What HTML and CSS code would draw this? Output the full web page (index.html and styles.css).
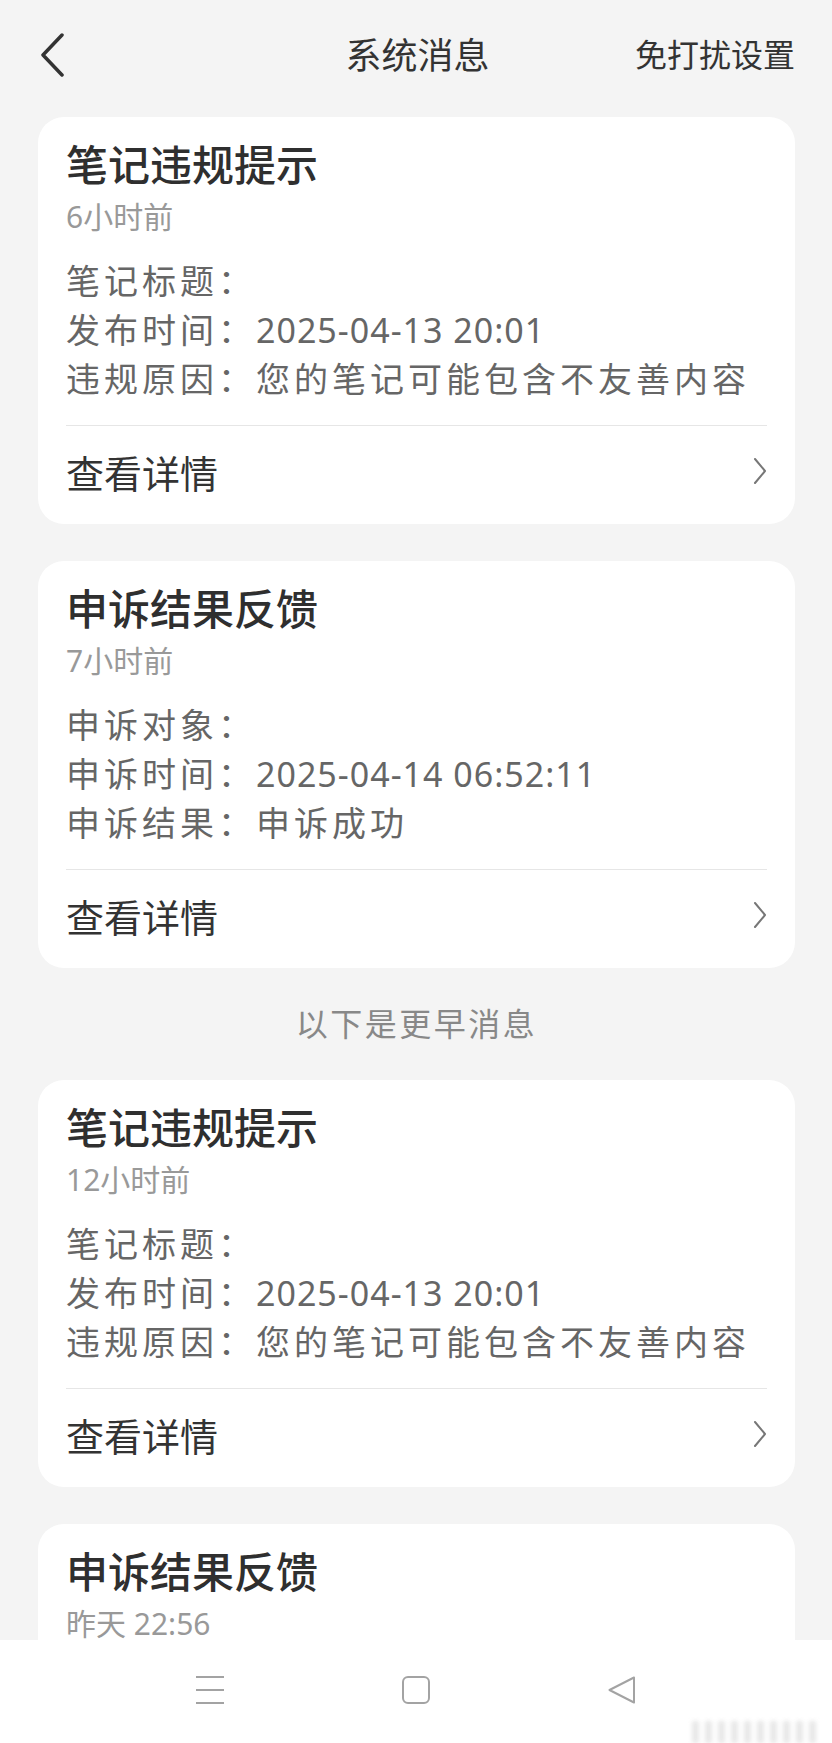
FILE: index.html
```html
<!DOCTYPE html>
<html>
<head>
    <title>系统消息</title>
    <link rel="stylesheet" href="styles.css">
</head>
<body>
    <div class="header">
        <svg class="back" width="26" height="44" viewBox="0 0 26 44">
            <polyline points="22,2 3,22 22,42" fill="none" stroke="#333" stroke-width="3.5" stroke-linecap="round" stroke-linejoin="round"/>
        </svg>
        <div class="header-title">系统消息</div>
        <div class="header-action">免打扰设置</div>
    </div>

    <div class="list">
        <div class="card">
            <div class="card-title">笔记违规提示</div>
            <div class="card-time">6小时前</div>
            <div class="card-body">
                <div class="row"><span class="label">笔记标题：</span></div>
                <div class="row"><span class="label">发布时间：</span><span class="value date">2025-04-13 20:01</span></div>
                <div class="row"><span class="label">违规原因：</span><span class="value">您的笔记可能包含不友善内容</span></div>
            </div>
            <div class="card-link">
                <span>查看详情</span>
                <svg width="14" height="26" viewBox="0 0 14 26"><polyline points="2,1 12,13 2,25" fill="none" stroke="#777" stroke-width="2" stroke-linecap="round" stroke-linejoin="round"/></svg>
            </div>
        </div>

        <div class="card">
            <div class="card-title">申诉结果反馈</div>
            <div class="card-time">7小时前</div>
            <div class="card-body">
                <div class="row"><span class="label">申诉对象：</span></div>
                <div class="row"><span class="label">申诉时间：</span><span class="value date">2025-04-14 06:52:11</span></div>
                <div class="row"><span class="label">申诉结果：</span><span class="value">申诉成功</span></div>
            </div>
            <div class="card-link">
                <span>查看详情</span>
                <svg width="14" height="26" viewBox="0 0 14 26"><polyline points="2,1 12,13 2,25" fill="none" stroke="#777" stroke-width="2" stroke-linecap="round" stroke-linejoin="round"/></svg>
            </div>
        </div>

        <div class="notice">以下是更早消息</div>

        <div class="card">
            <div class="card-title">笔记违规提示</div>
            <div class="card-time">12小时前</div>
            <div class="card-body">
                <div class="row"><span class="label">笔记标题：</span></div>
                <div class="row"><span class="label">发布时间：</span><span class="value date">2025-04-13 20:01</span></div>
                <div class="row"><span class="label">违规原因：</span><span class="value">您的笔记可能包含不友善内容</span></div>
            </div>
            <div class="card-link">
                <span>查看详情</span>
                <svg width="14" height="26" viewBox="0 0 14 26"><polyline points="2,1 12,13 2,25" fill="none" stroke="#777" stroke-width="2" stroke-linecap="round" stroke-linejoin="round"/></svg>
            </div>
        </div>

        <div class="card card-last">
            <div class="card-title">申诉结果反馈</div>
            <div class="card-time">昨天 22:56</div>
        </div>
    </div>

    <div class="navbar">
        <svg width="28" height="28" viewBox="0 0 28 28">
            <path d="M0 1H28M0 14H28M0 27H28" stroke="#a3a3a3" stroke-width="2"/>
        </svg>
        <svg width="28" height="28" viewBox="0 0 28 28">
            <rect x="1" y="1" width="26" height="26" rx="5" fill="none" stroke="#a3a3a3" stroke-width="2"/>
        </svg>
        <svg width="28" height="28" viewBox="0 0 28 28">
            <path d="M26 1.5 L1.5 14 L26 26.5 Z" fill="none" stroke="#a3a3a3" stroke-width="2" stroke-linejoin="round"/>
        </svg>
    </div>
    <div class="watermark"></div>
</body>
</html>
```

FILE: styles.css
```css
html, body {
    height: 100%;
    overflow: hidden;
}
body {
    margin: 0;
    background-color: #f4f4f4;
    font-family: "Noto Sans", "Noto Sans CJK SC", sans-serif;
    color: #333;
}
.header {
    height: 110px;
    display: grid;
    grid-template-columns: 1fr auto 1fr;
    align-items: center;
    padding: 0 37px 0 40px;
}
.back {
    display: block;
}
.header-title {
    font-size: 36px;
    padding-bottom: 4px;
    color: #333;
}
.header-action {
    justify-self: end;
    font-size: 32px;
    padding-bottom: 4px;
    color: #333;
}
.list {
    display: flex;
    flex-direction: column;
    gap: 37px;
    padding: 7px 37px 0 38px;
}
.card {
    background-color: white;
    border-radius: 26px;
    padding: 0 28px;
}
.card-last {
    padding-bottom: 90px;
}
.card-title {
    font-size: 42px;
    line-height: 52px;
    padding-top: 22px;
    font-weight: 500;
    color: #2f2f2f;
}
.card-time {
    font-size: 30px;
    line-height: 40px;
    margin-top: 6px;
    color: #999;
}
.card-body {
    margin-top: 20px;
    padding-bottom: 21px;
}
.row {
    display: flex;
    font-size: 34px;
    line-height: 49px;
    color: #666;
}
.label, .value {
    letter-spacing: 4px;
    white-space: nowrap;
}
.value.date {
    letter-spacing: 1px;
}
.card-link {
    border-top: 1px solid #e6e6e6;
    height: 99px;
    box-sizing: border-box;
    padding-bottom: 8px;
    display: flex;
    align-items: center;
    justify-content: space-between;
    font-size: 38px;
    color: #333;
}
.notice {
    text-align: center;
    font-size: 32px;
    line-height: 32px;
    letter-spacing: 2.5px;
    padding: 3px 0;
    color: #888;
}
.navbar {
    position: fixed;
    left: 0;
    right: 0;
    bottom: 0;
    height: 103px;
    box-sizing: border-box;
    padding-top: 36px;
    background-color: white;
    display: flex;
    justify-content: center;
    align-items: flex-start;
    gap: 178px;
}
.watermark {
    position: fixed;
    right: 10px;
    bottom: 0;
    width: 130px;
    height: 22px;
    background: repeating-linear-gradient(90deg, #d8d8d8 0 7px, transparent 7px 13px);
    filter: blur(2px);
    opacity: 0.6;
}
```
